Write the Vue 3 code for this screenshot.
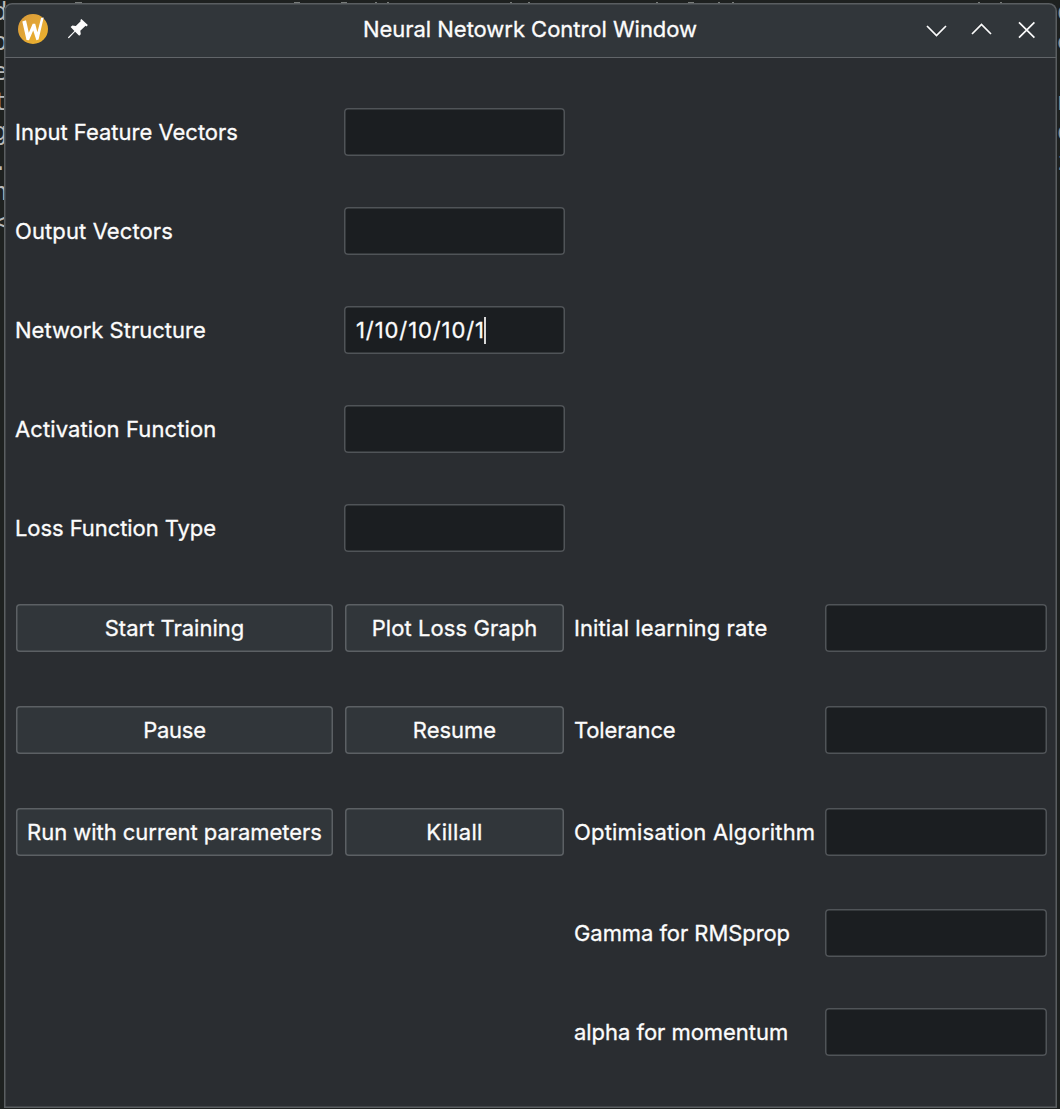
<script setup>
const title = { text: 'Neural Netowrk Control Window', track: -0.03 }

const rows = [
  { label: 'Input Feature Vectors', track: 0, value: '' },
  { label: 'Output Vectors', track: 0.11, value: '' },
  { label: 'Network Structure', track: 0, value: '1/10/10/10/1' },
  { label: 'Activation Function', track: 0.11, value: '' },
  { label: 'Loss Function Type', track: -0.07, value: '' },
]
const actions = [
  { left: 'Start Training', leftTrack: 0, mid: 'Plot Loss Graph', midTrack: 0.07, label: 'Initial learning rate', track: 0.09 },
  { left: 'Pause', leftTrack: -0.3, mid: 'Resume', midTrack: 0, label: 'Tolerance', track: -0.15 },
  { left: 'Run with current parameters', leftTrack: -0.04, mid: 'Killall', midTrack: 0.35, label: 'Optimisation Algorithm', track: 0.2 },
  { label: 'Gamma for RMSprop', track: -0.07 },
  { label: 'alpha for momentum', track: -0.04 },
]
const leftEdge = ['d', 'o', 'e', 't', 'g', '.', 'n', '<']
const rightEdge = ['o', 'e', '-', 'n', 'o', 'z', ' ', 'r']
const ticks = [[294, 6], [341, 6], [375, 2], [387, 2], [510, 2], [528, 2], [656, 2], [688, 6], [718, 2], [732, 2], [75, 7], [978, 2], [1000, 2]]

const tracking = (px) => ({ letterSpacing: px + 'px' })
</script>

<template>
  <div class="desktop">
    <div class="edge edge-left"><span v-for="(c, i) in leftEdge" :key="i">{{ c }}</span></div>
    <div class="edge edge-right"><span v-for="(c, i) in rightEdge" :key="i">{{ c }}</span></div>
    <div class="ticks">
      <i v-for="(t, i) in ticks" :key="i" :style="{ left: t[0] + 'px', width: t[1] + 'px' }"></i>
    </div>
    <main class="window">
      <header class="titlebar">
        <svg class="logo" width="30" height="30" viewBox="0 0 30 30">
          <defs>
            <linearGradient id="amber" x1="0" y1="0" x2="1" y2="1">
              <stop offset="0" stop-color="#d89a3c" />
              <stop offset="1" stop-color="#eeb42d" />
            </linearGradient>
          </defs>
          <circle cx="15" cy="15" r="15" fill="url(#amber)" />
          <path d="M4.3 7.4 L8 6.2 L10.8 18.8 L14.7 9.8 L17.2 9.7 L19.4 18.3 L23.1 4 L25.7 3.4 L20.6 25.5 L18.4 26.3 L15.2 16.6 L11 26.3 L8.5 26.1 Z" fill="#fff" />
        </svg>
        <svg class="pin" width="22" height="22" viewBox="0 0 22 22">
          <path d="M14.4 1 L20.8 7.1 L19.6 8.4 L18.6 7.7 L13.3 12.7 L13.8 16.2 L12.2 17.7 L8.1 13.7 L2.1 19.9 L.9 20.3 L1.3 19.1 L7.4 13 L3.6 9 L5.3 7.5 L8.8 7.9 L13.9 3 L13.2 2.2 Z" fill="#fcfcfc" />
        </svg>
        <h1 :style="tracking(title.track)">{{ title.text }}</h1>
        <svg class="controls" width="112" height="20" viewBox="0 0 112 20" fill="none" stroke="#fcfcfc" stroke-width="1.7">
          <path d="M1 6 L10.5 15.5 L20 6" />
          <path d="M46 14 L55.5 4.5 L65 14" />
          <path d="M93 2.3 L108.4 17.7 M108.4 2.3 L93 17.7" />
        </svg>
      </header>
      <section class="form">
        <template v-for="row in rows" :key="row.label">
          <label :style="tracking(row.track)">{{ row.label }}</label>
          <div class="field">{{ row.value }}<span v-if="row.value" class="caret"></span></div>
          <span></span><span></span>
        </template>
        <template v-for="a in actions" :key="a.label">
          <button v-if="a.left" type="button" :style="tracking(a.leftTrack)">{{ a.left }}</button><span v-else></span>
          <button v-if="a.mid" type="button" class="mid" :style="tracking(a.midTrack)">{{ a.mid }}</button><span v-else></span>
          <label :style="tracking(a.track)">{{ a.label }}</label>
          <div class="field right"></div>
        </template>
      </section>
    </main>
  </div>
</template>

<style>
body { background: #1e2120; overflow: hidden; }
</style>
<style scoped>
* { box-sizing: border-box; }
.desktop {
  position: relative;
  width: 1060px;
  height: 1109px;
  padding: 3px 3px 0 4px;
  overflow: hidden;
  background: #1e2120;
  font-family: Inter, sans-serif;
  font-size: 22px;
  font-weight: 400;
  color: #fcfcfc;
}
.edge {
  position: absolute;
  top: -3px;
  display: flex;
  flex-direction: column;
  font: 24px/30px "DejaVu Sans Mono", monospace;
  color: #b9bab9;
}
.edge span { height: 30px; white-space: pre; }
.edge-left { left: -7px; }
.edge-right { left: 1057px; color: #969997; }
.ticks i {
  position: absolute;
  top: 2px;
  height: 1px;
  background: #777b79;
}
.window {
  position: relative;
  width: 1053px;
  height: 1105px;
  background: #2a2d31;
  border-radius: 8px 8px 0 0;
  overflow: hidden;
  -webkit-text-stroke: 0.3px #fcfcfc;
}
.window::after {
  content: "";
  position: absolute;
  inset: 0;
  border-radius: inherit;
  box-shadow: inset 0 0 0 1.5px #5a5e61;
  pointer-events: none;
}
.titlebar {
  display: flex;
  align-items: center;
  height: 55px;
  padding: 0 19px 2px 14px;
  background: #31363a;
  border-bottom: 1px solid #616569;
}
.pin { margin-left: 19px; }
.controls { margin-top: 2px; }
h1 {
  flex: 1;
  margin: 0;
  padding-left: 45px;
  font-size: 22px;
  font-weight: 400;
  line-height: 30px;
  text-align: center;
  white-space: nowrap;
}
.form {
  display: grid;
  grid-template-columns: 329px 230px 250px 223px;
  grid-template-rows: 99px 99px 99px 99px 100px 102px 102px 101px 99px 48px;
  align-items: start;
  padding: 50px 0 0 11px;
}
label, button {
  height: 48px;
  line-height: 48px;
  white-space: nowrap;
}
.field {
  display: flex;
  align-items: center;
  width: 221px;
  height: 48px;
  padding-left: 12px;
  border-radius: 4px;
  background: #1b1e21;
  box-shadow: inset 0 0 0 1.5px #505458;
  letter-spacing: 0.9px;
}
.field.right { margin-left: 1px; width: 222px; }
.caret {
  width: 2px;
  height: 27px;
  margin-left: -1px;
  background: #d8d8d8;
}
button {
  width: 317px;
  margin: 0 0 0 1px;
  padding: 0;
  border: 0;
  border-radius: 4px;
  background: #31363a;
  box-shadow: inset 0 0 0 1.5px #5c6064;
  color: inherit;
  font: inherit;
  line-height: 48px;
}
button.mid { width: 219px; }
</style>
